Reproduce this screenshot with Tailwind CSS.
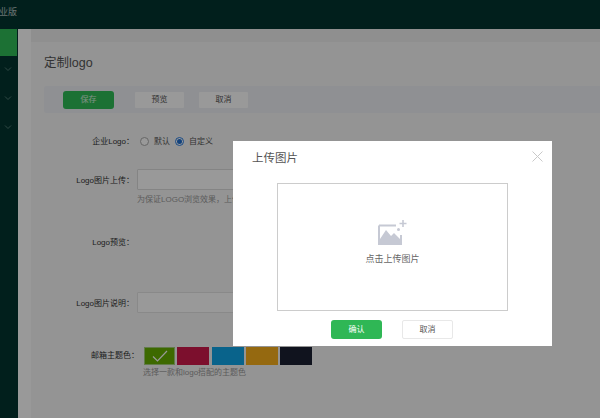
<!DOCTYPE html>
<html lang="zh-CN">
<head>
  <meta charset="UTF-8">
  <title>定制logo</title>
  <script src="https://cdn.jsdelivr.net/npm/@tailwindcss/browser@4"></script>
</head>
<body class="relative w-[600px] h-[418px] overflow-hidden font-['Liberation_Sans','Noto_Sans_CJK_SC',sans-serif] bg-white">
  <!-- top bar -->
  <div class="h-[29px] bg-[#023430] overflow-hidden">
    <div class="text-[9px] leading-[24px] text-white/70 -ml-[1px]">业版</div>
  </div>

  <div class="flex h-[389px]">
    <!-- sidebar -->
    <div class="w-[18px] bg-[#023430] shrink-0">
      <div class="h-[27px] w-[17px] bg-[#30bd58]"></div>
      <div class="flex flex-col items-center gap-[21px] mt-[9px] pr-[3px]">
        <svg class="w-[8px] h-[8px]" viewBox="0 0 8 8" fill="none" stroke="#4f7a72" stroke-width="1"><path d="M1 2.5 4 5.5 7 2.5"/></svg>
        <svg class="w-[8px] h-[8px]" viewBox="0 0 8 8" fill="none" stroke="#4f7a72" stroke-width="1"><path d="M1 2.5 4 5.5 7 2.5"/></svg>
        <svg class="w-[8px] h-[8px]" viewBox="0 0 8 8" fill="none" stroke="#4f7a72" stroke-width="1"><path d="M1 2.5 4 5.5 7 2.5"/></svg>
      </div>
    </div>

    <!-- content -->
    <div class="flex-1 pl-[13px] flex flex-col">
      <div class="h-[13px] shrink-0 bg-[#efefef]"></div>
      <div class="flex-1 bg-[#f7f7f7] pl-[13px] text-[#333]">
        <h1 class="text-[12.5px] leading-[20px] pt-[11px] text-[#555]">定制logo</h1>
        <div class="mt-[13px] h-[27px] bg-[#eff1f5] rounded-l-[2px] flex items-center pl-[19px] text-[8px]">
          <button class="w-[51px] h-[18px] rounded-[3px] bg-[#30bd58] text-white/80">保存</button>
          <button class="ml-[21px] w-[49px] h-[16px] rounded-[1px] bg-white text-[#555]">预览</button>
          <button class="ml-[15px] w-[49px] h-[16px] rounded-[1px] bg-white text-[#555]">取消</button>
        </div>

        <div class="mt-[19px] text-[8px] text-[#333]">
          <div class="flex items-center h-[18px]">
            <div class="w-[90px] text-right pt-[2px]">企业Logo：</div>
            <div class="flex items-center ml-[6px] text-[#555]">
              <span class="w-[9px] h-[9px] rounded-full border border-[#aaa] bg-white"></span>
              <span class="ml-[5px] pt-[2px]">默认</span>
              <span class="ml-[5px] w-[9px] h-[9px] rounded-full border border-[#2a7de1] flex items-center justify-center bg-white"><span class="w-[5px] h-[5px] rounded-full bg-[#1e6fd0]"></span></span>
              <span class="ml-[5px] pt-[2px]">自定义</span>
            </div>
          </div>

          <div class="flex mt-[19px]">
            <div class="w-[90px] text-right leading-[23px]">Logo图片上传：</div>
            <div class="ml-[3px]">
              <div class="w-[200px] h-[21px] border border-[#dcdcdc] bg-white rounded-[1px]"></div>
              <div class="mt-[3px] leading-[14px] whitespace-nowrap text-[#999]">为保证LOGO浏览效果，上传</div>
            </div>
          </div>

          <div class="mt-[29px] w-[90px] text-right leading-[14px]">Logo预览：</div>

          <div class="flex mt-[42px]">
            <div class="w-[90px] text-right leading-[23px]">Logo图片说明：</div>
            <div class="ml-[3px] w-[200px] h-[21px] border border-[#e5e5e5] bg-white rounded-[1px]"></div>
          </div>

          <div class="flex mt-[32px]">
            <div class="w-[95px] text-right leading-[18px]">邮箱主题色：</div>
            <div class="ml-[5px]">
              <div class="flex">
                <div class="w-[31px] h-[18px] bg-[#66b000] border border-[#a4cf7a] flex items-center justify-center">
                  <svg class="w-[16px] h-[12px]" viewBox="0 0 16 12" fill="none" stroke="#fff" stroke-width="1.2"><path d="M1 6.5 5.5 11 15 1"/></svg>
                </div>
                <div class="ml-[2px] w-[32px] h-[18px] bg-[#cf1a4c]"></div>
                <div class="ml-[3px] w-[32px] h-[18px] bg-[#10a6e8]"></div>
                <div class="ml-[2px] w-[32px] h-[18px] bg-[#f8b01c]"></div>
                <div class="ml-[2px] w-[32px] h-[18px] bg-[#1c2033]"></div>
              </div>
              <div class="mt-[1px] -ml-[1px] text-[#999] leading-[14px]">选择一款和logo搭配的主题色</div>
            </div>
          </div>
        </div>
      </div>
    </div>
  </div>

  <!-- overlay -->
  <div class="absolute inset-0 bg-black/40"></div>

  <!-- upload dialog -->
  <div class="absolute left-[233px] top-[141px] w-[319px] h-[205px] bg-white">
    <div class="flex items-center justify-between pl-[19px] pr-[9px] h-[34px]">
      <span class="text-[11.5px] text-[#555] pt-[1px]">上传图片</span>
      <svg class="w-[11px] h-[11px] -mt-[3px]" viewBox="0 0 11 11" fill="none" stroke="#c9c9c9" stroke-width="1"><path d="M.5.5l10 10M10.5.5l-10 10"/></svg>
    </div>
    <div class="mx-[44px] mt-[8px] h-[128px] border border-[#ccc] flex flex-col items-center pt-[35px]">
      <svg class="w-[30px] h-[26px]" viewBox="0 0 30 26" fill="none">
        <path d="M1 6.5h17M1 6.5v18.5h22v-9" stroke="#c6c9d4" stroke-width="2"/>
        <path d="M2 25v-5l6-9 5 6 3-3 7 7v4z" fill="#c6c9d4"/>
        <path d="M25 1v7M21.5 4.500h7" stroke="#c6c9d4" stroke-width="1.600"/>
        <circle cx="20.500" cy="10.500" r="1.500" fill="#c6c9d4"/>
      </svg>
      <div class="mt-[7px] text-[9px] leading-[14px] text-[#666]">点击上传图片</div>
    </div>
    <div class="flex justify-center gap-[20px] mt-[9px] pr-[1px] text-[8px]">
      <button class="w-[51px] h-[19px] rounded-[3px] bg-[#2fb755] text-white">确认</button>
      <button class="w-[51px] h-[19px] rounded-[2px] bg-white border border-[#e8e8e8] text-[#555]">取消</button>
    </div>
  </div>
</body>
</html>
